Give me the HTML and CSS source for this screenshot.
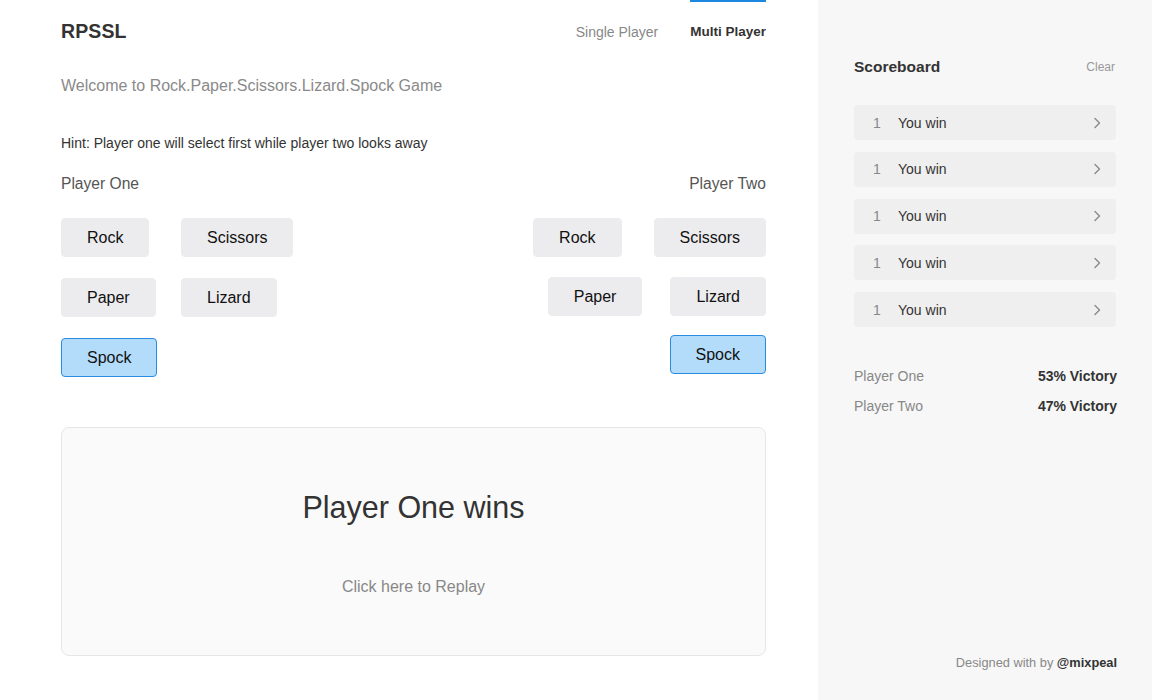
FILE: index.html
```html
<!DOCTYPE html>
<html lang="en">
<head>
<meta charset="utf-8">
<title>RPSSL</title>
<link rel="stylesheet" href="styles.css">
</head>
<body>
<div class="app">
  <main class="main">
    <header class="header">
      <div class="logo">RPSSL</div>
      <nav class="nav">
        <a class="nav-link">Single Player</a>
        <a class="nav-link active">Multi Player</a>
      </nav>
    </header>
    <p class="welcome">Welcome to Rock.Paper.Scissors.Lizard.Spock Game</p>
    <p class="hint">Hint: Player one will select first while player two looks away</p>
    <div class="players">
      <section class="player one">
        <div class="player-name">Player One</div>
        <div class="choices-grid">
          <button class="choice">Rock</button>
          <button class="choice">Scissors</button>
          <button class="choice">Paper</button>
          <button class="choice">Lizard</button>
          <button class="choice selected">Spock</button>
        </div>
      </section>
      <section class="player two">
        <div class="player-name">Player Two</div>
        <div class="choices-rows">
          <div class="choice-row r1">
            <button class="choice">Rock</button>
            <button class="choice">Scissors</button>
          </div>
          <div class="choice-row r2">
            <button class="choice">Paper</button>
            <button class="choice">Lizard</button>
          </div>
          <div class="choice-row r3">
            <button class="choice selected">Spock</button>
          </div>
        </div>
      </section>
    </div>
    <div class="result">
      <h2 class="result-title">Player One wins</h2>
      <a class="replay">Click here to Replay</a>
    </div>
  </main>
  <aside class="sidebar">
    <div class="sb-head">
      <h3 class="sb-title">Scoreboard</h3>
      <a class="clear">Clear</a>
    </div>
    <ul class="scores">
      <li class="score"><span class="num">1</span><span class="label">You win</span><svg class="chev" width="8" height="12" viewBox="0 0 8 12"><path d="M2 1.5 L6.5 6 L2 10.5" fill="none" stroke="#8a8a8a" stroke-width="1.4" stroke-linecap="round" stroke-linejoin="round"/></svg></li>
      <li class="score"><span class="num">1</span><span class="label">You win</span><svg class="chev" width="8" height="12" viewBox="0 0 8 12"><path d="M2 1.5 L6.5 6 L2 10.5" fill="none" stroke="#8a8a8a" stroke-width="1.4" stroke-linecap="round" stroke-linejoin="round"/></svg></li>
      <li class="score"><span class="num">1</span><span class="label">You win</span><svg class="chev" width="8" height="12" viewBox="0 0 8 12"><path d="M2 1.5 L6.5 6 L2 10.5" fill="none" stroke="#8a8a8a" stroke-width="1.4" stroke-linecap="round" stroke-linejoin="round"/></svg></li>
      <li class="score"><span class="num">1</span><span class="label">You win</span><svg class="chev" width="8" height="12" viewBox="0 0 8 12"><path d="M2 1.5 L6.5 6 L2 10.5" fill="none" stroke="#8a8a8a" stroke-width="1.4" stroke-linecap="round" stroke-linejoin="round"/></svg></li>
      <li class="score"><span class="num">1</span><span class="label">You win</span><svg class="chev" width="8" height="12" viewBox="0 0 8 12"><path d="M2 1.5 L6.5 6 L2 10.5" fill="none" stroke="#8a8a8a" stroke-width="1.4" stroke-linecap="round" stroke-linejoin="round"/></svg></li>
    </ul>
    <div class="stats">
      <div class="stat"><span class="stat-name">Player One</span><span class="stat-val">53% Victory</span></div>
      <div class="stat"><span class="stat-name">Player Two</span><span class="stat-val">47% Victory</span></div>
    </div>
    <footer class="credit">Designed with by <strong>@mixpeal</strong></footer>
  </aside>
</div>
</body>
</html>
```

FILE: styles.css
```css
* { box-sizing: border-box; }
html, body {
  margin: 0;
  padding: 0;
  height: 100%;
}
body {
  font-family: "Liberation Sans", Arial, Helvetica, sans-serif;
  color: #333;
  background: #fff;
}
.app {
  display: flex;
  width: 1152px;
  height: 700px;
  overflow: hidden;
}
.main {
  width: 818px;
  padding: 0 52px 0 61px;
}
.header {
  height: 64px;
  display: flex;
  align-items: center;
  justify-content: space-between;
}
.logo {
  font-size: 19.5px;
  font-weight: bold;
  color: #333;
  letter-spacing: 0.1px;
  margin-bottom: 1px;
}
.nav {
  display: flex;
  align-self: stretch;
  gap: 32px;
}
.nav-link {
  display: flex;
  align-items: center;
  height: 61px;
  border-top: 2px solid transparent;
  font-size: 14px;
  color: #888;
}
.nav-link.active {
  border-top-color: #1b87e0;
  color: #333;
  font-weight: bold;
  font-size: 13.5px;
}
.welcome {
  margin: 12px 0 0;
  font-size: 16px;
  line-height: 20px;
  color: #8a8a8a;
}
.hint {
  margin: 39px 0 0;
  font-size: 14px;
  line-height: 16px;
  color: #333;
}
.players {
  display: flex;
  justify-content: space-between;
  margin-top: 24px;
}
.player-name {
  font-size: 15.6px;
  line-height: 18px;
  color: #555;
}
.player.two .player-name { text-align: right; }
.choices-grid {
  margin-top: 25px;
  display: grid;
  grid-template-columns: 120px auto;
  row-gap: 21px;
  justify-items: start;
}
.choices-rows {
  margin-top: 25px;
  display: flex;
  flex-direction: column;
  gap: 20px;
}
.choice-row {
  display: flex;
  justify-content: flex-end;
  gap: 32px;
}
.choice-row.r2 { gap: 28px; }
.choice-row.r3 { margin-top: -1px; }
.choice {
  height: 39px;
  padding: 0 25px;
  border: 1px solid #ececee;
  border-radius: 4px;
  background: #ececee;
  font-family: inherit;
  font-size: 16px;
  color: #111;
}
.choice.selected {
  background: #b3dcfb;
  border-color: #2a8ce0;
}
.result {
  margin-top: 50px;
  height: 229px;
  border: 1px solid #e6e6e6;
  border-radius: 8px;
  background: #fafafa;
  display: flex;
  flex-direction: column;
  align-items: center;
}
.result-title {
  margin: 61px 0 0;
  font-size: 30.5px;
  line-height: 36px;
  font-weight: normal;
  color: #333;
}
.replay {
  margin-top: 52px;
  font-size: 16px;
  line-height: 20px;
  color: #888;
}
.sidebar {
  width: 334px;
  background: #f7f7f7;
  padding: 0 35px 0 36px;
  display: flex;
  flex-direction: column;
}
.sb-head {
  margin-top: 58px;
  display: flex;
  justify-content: space-between;
  align-items: center;
  height: 18px;
}
.sb-title {
  margin: 0;
  font-size: 15.5px;
  font-weight: bold;
  color: #333;
}
.clear {
  font-size: 12px;
  color: #999;
  margin-right: 2px;
}
.scores {
  list-style: none;
  margin: 29px 0 0;
  padding: 0;
  display: flex;
  flex-direction: column;
  gap: 11.75px;
  width: 262px;
}
.score {
  height: 35px;
  border-radius: 4px;
  background: #efefef;
  display: flex;
  align-items: center;
  padding: 0 15px 0 19px;
  font-size: 14px;
}
.num {
  width: 25px;
  color: #888;
}
.label {
  flex: 1;
  color: #333;
}
.chev { display: block; }
.stats {
  margin-top: 40px;
  display: flex;
  flex-direction: column;
  gap: 12px;
}
.stat {
  display: flex;
  justify-content: space-between;
  font-size: 14px;
  line-height: 18px;
}
.stat-name { color: #888; }
.stat-val { color: #333; font-weight: bold; font-size: 14px; }
.credit {
  margin-top: auto;
  margin-bottom: 29px;
  text-align: right;
  font-size: 12.8px;
  line-height: 16px;
  color: #888;
}
.credit strong { color: #333; }
```
